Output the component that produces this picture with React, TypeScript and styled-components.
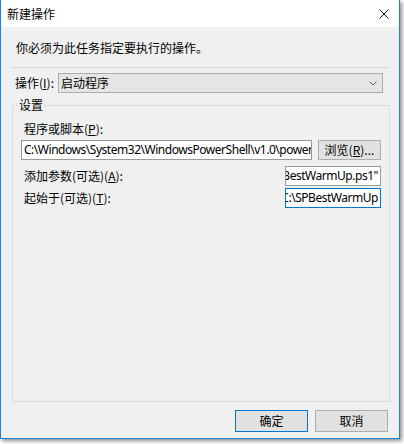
import React from "react";
import styled, { createGlobalStyle } from "styled-components";

const Global = createGlobalStyle`
  html, body { margin: 0; padding: 0; background: #ffffff; overflow: hidden; }
  body { width: 404px; height: 444px; }
`;

const CJK = `"Noto Sans CJK SC", "Noto Sans", sans-serif`;
const LATIN = `"Segoe UI", "Noto Sans", "Noto Sans CJK SC", sans-serif`;

const Window = styled.div`
  box-sizing: border-box;
  width: 400px;
  height: 439px;
  border: 1px solid #1883d7;
  border-top: 0;
  background: #f0f0f0;
  box-shadow: 2px 2px 4px rgba(0, 0, 0, 0.45);
  display: flex;
  flex-direction: column;
  font-family: ${CJK};
  font-size: 12px;
  color: #000;
`;

const TitleBar = styled.div`
  height: 27px;
  flex: none;
  background: #ffffff;
  display: flex;
  align-items: center;
  justify-content: space-between;
  padding: 0 10px 0 6px;
  line-height: 16px;
`;

const Body = styled.div`
  flex: 1;
  display: flex;
  flex-direction: column;
  padding: 0 9px 0 11px;
  min-height: 0;
`;

const Instruction = styled.div`
  margin: 13px 0 0 4px;
  line-height: 16px;
  height: 16px;
`;

const Separator = styled.div`
  margin-top: 11px;
  width: 376px;
  height: 1px;
  background: #d2d2d2;
`;

const ComboRow = styled.div`
  margin-top: 5px;
  height: 20px;
  display: flex;
  align-items: center;
  padding-left: 3px;
`;

const RowLabel = styled.span<{ $w?: number; $indent?: number }>`
  line-height: 16px;
  white-space: nowrap;
  margin-left: ${(p) => p.$indent ?? 0}px;
  ${(p) => (p.$w ? `width: ${p.$w}px; flex: none;` : "")}
`;

const Combo = styled.div`
  box-sizing: border-box;
  width: 325px;
  height: 20px;
  background: #e5e5e5;
  border: 1px solid #acacac;
  display: flex;
  align-items: center;
  justify-content: space-between;
  padding: 0 5px 0 2px;
  line-height: 16px;
`;

const Group = styled.fieldset`
  margin: 4px 0 0 0;
  flex: 1;
  min-width: 0;
  width: 378px;
  box-sizing: border-box;
  border: 1px solid #dcdcdc;
  padding: 8px 8px 0 8px;
  display: flex;
  flex-direction: column;
`;

const Legend = styled.legend`
  padding: 0 1px;
  margin-left: -3px;
  line-height: 16px;
  font-size: 12px;
`;

const FieldLabel = styled.div`
  margin-left: 3px;
  line-height: 16px;
  height: 16px;
`;

const Row = styled.div<{ $top: number }>`
  margin-top: ${(p) => p.$top}px;
  height: 20px;
  display: flex;
  align-items: center;
  justify-content: space-between;
  gap: 6px;
`;

const Field = styled.div<{ $w: number; $focus?: boolean; $end?: boolean }>`
  box-sizing: border-box;
  width: ${(p) => p.$w}px;
  height: 20px;
  flex: none;
  background: #ffffff;
  border: 1px solid ${(p) => (p.$focus ? "#0078d7" : "#9a9a9a")};
  overflow: hidden;
  display: flex;
  align-items: center;
  justify-content: ${(p) => (p.$end ? "flex-end" : "flex-start")};
  padding: 0 2px;
  font-family: ${LATIN};
  font-size: 12px;
  letter-spacing: -0.47px;
  line-height: 16px;
`;

const FieldText = styled.span`
  white-space: nowrap;
  flex: none;
`;

const Button = styled.div<{ $w: number; $default?: boolean }>`
  box-sizing: border-box;
  width: ${(p) => p.$w}px;
  flex: none;
  height: ${(p) => (p.$default !== undefined ? 22 : 20)}px;
  background: #e1e1e1;
  border: 1px solid ${(p) => (p.$default ? "#0078d7" : "#adadad")};
  display: flex;
  align-items: center;
  justify-content: center;
  line-height: 16px;
  white-space: nowrap;
`;

const Footer = styled.div`
  margin: 8px 2px 6px 0;
  display: flex;
  justify-content: flex-end;
  gap: 7px;
`;

const Key = styled.span`
  text-decoration: underline;
  text-underline-offset: 1px;
`;

export default function App() {
  return (
    <>
      <Global />
      <Window>
        <TitleBar>
          <span>新建操作</span>
          <svg width="10" height="10" viewBox="0 0 10 10">
            <path d="M0.5 0.5 L9.5 9.5 M9.5 0.5 L0.5 9.5" stroke="#111" strokeWidth="1" fill="none" />
          </svg>
        </TitleBar>
        <Body>
          <Instruction>你必须为此任务指定要执行的操作。</Instruction>
          <Separator />
          <ComboRow>
            <RowLabel $w={43}>
              操作(<Key>I</Key>):
            </RowLabel>
            <Combo>
              <span>启动程序</span>
              <svg width="8" height="5" viewBox="0 0 8 5">
                <path d="M0.5 0.5 L4 4 L7.5 0.5" stroke="#606060" strokeWidth="1" fill="none" />
              </svg>
            </Combo>
          </ComboRow>
          <Group>
            <Legend>设置</Legend>
            <FieldLabel>
              程序或脚本(<Key>P</Key>):
            </FieldLabel>
            <Row $top={3}>
              <Field $w={291}>
                <FieldText>C:\Windows\System32\WindowsPowerShell\v1.0\powershell.exe</FieldText>
              </Field>
              <Button $w={63}>
                浏览(<Key>R</Key>)...
              </Button>
            </Row>
            <Row $top={6}>
              <RowLabel $indent={3}>
                添加参数(可选)(<Key>A</Key>):
              </RowLabel>
              <Field $w={96} $end>
                <FieldText>-file "C:\SPBestWarmUp\SPBestWarmUp.ps1"</FieldText>
              </Field>
            </Row>
            <Row $top={2}>
              <RowLabel $indent={3}>
                起始于(可选)(<Key>T</Key>):
              </RowLabel>
              <Field $w={96} $focus $end>
                <FieldText>C:\SPBestWarmUp</FieldText>
              </Field>
            </Row>
          </Group>
          <Footer>
            <Button $w={73} $default>
              确定
            </Button>
            <Button $w={73} $default={false}>
              取消
            </Button>
          </Footer>
        </Body>
      </Window>
    </>
  );
}
